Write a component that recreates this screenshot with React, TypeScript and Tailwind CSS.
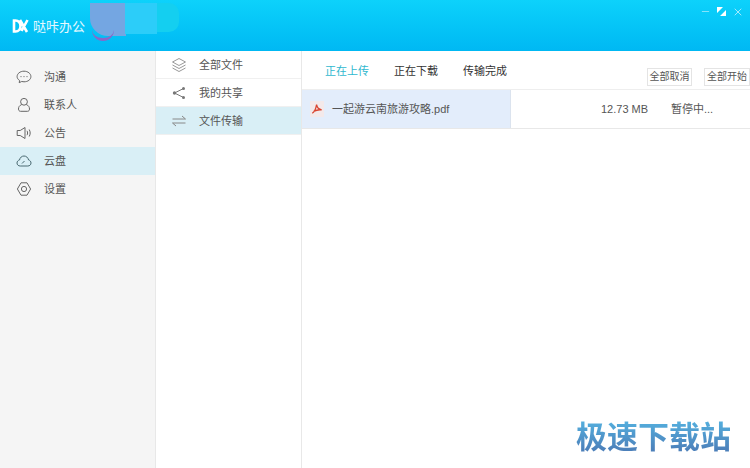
import { Minus, X } from 'lucide-react';

const CJK = "font-['Liberation_Sans','Noto_Sans_CJK_SC',sans-serif]";

const iconProps = {
  width: 16,
  height: 16,
  viewBox: '0 0 16 16',
  fill: 'none',
  stroke: '#666',
  strokeWidth: 1,
};

const ChatIcon = () => (
  <svg {...iconProps}>
    <path d="M8 2.2c3.9 0 6.9 2.4 6.9 5.4s-3 5.2-6.9 5.2c-.8 0-1.6-.1-2.3-.3l-2.5 1.2.4-2.2C2 10.500 1.100 9.100 1.100 7.600 1.100 4.600 4.100 2.200 8 2.200z" />
    <circle cx="5" cy="7.600" r=".6" fill="#666" stroke="none" />
    <circle cx="8" cy="7.600" r=".6" fill="#666" stroke="none" />
    <circle cx="11" cy="7.600" r=".6" fill="#666" stroke="none" />
  </svg>
);

const UserIcon = () => (
  <svg {...iconProps}>
    <circle cx="8" cy="4.800" r="3.400" />
    <path d="M5.600 7.600C3.400 8.500 2.500 10 2.500 12c0 1.300.7 2.300 2 2.300h7c1.300 0 2-1 2-2.300 0-2-.9-3.500-3.100-4.400" />
  </svg>
);

const SpeakerIcon = () => (
  <svg {...iconProps}>
    <path d="M1.200 5.500h3l4.800-3v11l-4.800-3h-3z" />
    <path d="M11 5.800c.8 1.400.8 3 0 4.400M13.200 4.500c1.300 2.300 1.300 4.700 0 7" />
  </svg>
);

const CloudIcon = () => (
  <svg {...iconProps} stroke="#4a6a72">
    <path d="M4.200 13c-1.900 0-3.200-1.300-3.200-3 0-1.500 1-2.700 2.500-3C4 4.500 5.800 3 8 3s4 1.500 4.600 4c1.400.3 2.400 1.500 2.400 3 0 1.700-1.300 3-3.200 3z" />
    <path d="M6 10.500l2.500-2.500" />
  </svg>
);

const GearIcon = () => (
  <svg {...iconProps}>
    <path d="M5 1.800h6l3.600 6.200L11 14.200H5L1.400 8z" strokeLinejoin="round" />
    <circle cx="8" cy="8" r="2.600" />
  </svg>
);

const LayersIcon = () => (
  <svg {...iconProps} stroke="#999">
    <path d="M8 1.500l6.500 3.500L8 8.500 1.500 5z" />
    <path d="M1.500 8L8 11.500 14.500 8M1.500 11L8 14.500 14.500 11" />
  </svg>
);

const ShareIcon = () => (
  <svg {...iconProps} stroke="#777">
    <path d="M12.500 3.500L3.500 8l9 4.500" />
    <circle cx="12.500" cy="3.500" r="1.500" fill="#777" stroke="none" />
    <circle cx="3.500" cy="8" r="1.700" fill="#777" stroke="none" />
    <circle cx="12.500" cy="12.500" r="1.500" fill="#777" stroke="none" />
  </svg>
);

const TransferIcon = () => (
  <svg {...iconProps} stroke="#888">
    <path d="M1.500 6h13L11 3M14.500 10h-13L5 13" />
  </svg>
);

const PdfIcon = () => (
  <span className="flex items-center justify-center w-[14px] h-[16px] bg-[#f3e9ea]">
    <svg width="12" height="12" viewBox="0 0 14 14" fill="none" stroke="#d9442f" strokeWidth="1.500">
      <path d="M1.500 12c2-1 4-4.500 5-10 .5 3 2.500 5.500 6 6-3.500-.5-7 .5-9.500 1.700" />
    </svg>
  </span>
);

const RestoreIcon = () => (
  <svg width="11" height="11" viewBox="0 0 11 11" fill="#fff">
    <path d="M1 1h6L1 7zM10 10H4l6-6z" />
  </svg>
);

const navItems = [
  { label: '沟通', icon: <ChatIcon /> },
  { label: '联系人', icon: <UserIcon /> },
  { label: '公告', icon: <SpeakerIcon /> },
  { label: '云盘', icon: <CloudIcon />, active: true },
  { label: '设置', icon: <GearIcon /> },
];

const fileMenu = [
  { label: '全部文件', icon: <LayersIcon /> },
  { label: '我的共享', icon: <ShareIcon /> },
  { label: '文件传输', icon: <TransferIcon />, active: true },
];

export default function App() {
  return (
    <div className={`relative flex flex-col w-[750px] h-[468px] overflow-hidden bg-white ${CJK}`}>
      <header className="relative flex items-center justify-between h-[51px] shrink-0 bg-gradient-to-b from-[#0dd2fb] to-[#00b8f3]">
        <div className="flex items-center gap-[4px] pl-[12px] pt-[1px]">
          <svg width="17" height="14" viewBox="0 0 17 14" fill="none" stroke="#fff" strokeWidth="2.600">
            <path d="M2 1.500v11h1.500c3 0 5-2.200 5-5.500s-2-5.500-5-5.500zM8 1l7 12M15.500 1L9.500 12" />
          </svg>
          <span className="text-[13px] leading-none text-white/90">哒咔办公</span>
        </div>
        <div className="flex items-center gap-[5px] pr-[6px] pb-[28px]">
          <Minus size={11} color="#bdeefc" strokeWidth={1.500} />
          <RestoreIcon />
          <X size={12} color="#d4f3fd" strokeWidth={1.500} />
        </div>
        {/* blurred-out account name over the header */}
        <div className="absolute left-[90px] top-[3px] w-[36px] h-[33px] rounded-bl-[18px] bg-[#74a6e2]" />
        <div className="absolute left-[92px] top-[30px] w-[22px] h-[11px] rounded-b-[12px] border-b-[3px] border-[#8a67c8]" />
        <div className="absolute left-[125px] top-[3px] w-[32px] h-[31px] bg-[#2ccdf9]" />
        <div className="absolute left-[157px] top-[3px] w-[22px] h-[29px] rounded-r-[10px] bg-[#14cff0]" />
      </header>

      <div className="flex flex-1 min-h-0">
        <aside className="w-[156px] shrink-0 pt-[12px] bg-[#f5f5f5] border-r border-[#e8e8e8]">
          {navItems.map((item) => (
            <div
              key={item.label}
              className={`flex items-center gap-[12px] h-[28px] pl-[16px] text-[11px] text-[#555] ${item.active ? 'bg-[#d9eff6]' : ''}`}
            >
              {item.icon}
              <span>{item.label}</span>
            </div>
          ))}
        </aside>

        <nav className="w-[146px] shrink-0 bg-white border-r border-[#e8e8e8]">
          {fileMenu.map((item) => (
            <div
              key={item.label}
              className={`flex items-center gap-[12px] h-[28px] pl-[15px] pt-[1px] text-[11px] text-[#555] border-b border-[#f0f0f0] ${item.active ? 'bg-[#d9eff6]' : ''}`}
            >
              {item.icon}
              <span>{item.label}</span>
            </div>
          ))}
        </nav>

        <main className="flex-1 min-w-0">
          <div className="flex items-start justify-between h-[39px] border-b border-[#eee]">
            <div className="flex gap-[25px] pl-[23px] pt-[12px] text-[11px] leading-[16px] text-[#333]">
              <span className="text-[#2fb8cf]">正在上传</span>
              <span>正在下载</span>
              <span>传输完成</span>
            </div>
            <div className="flex gap-[12px] pt-[17px]">
              <button className="w-[45px] h-[18px] text-[10px] leading-none text-[#555] bg-white border border-[#e4e4e4]">全部取消</button>
              <button className="w-[46px] h-[18px] text-[10px] leading-none text-[#555] bg-white border border-[#e4e4e4]">全部开始</button>
            </div>
          </div>
          <div className="flex items-center h-[39px] border-b border-[#e8e8e8] text-[11px] text-[#555]">
            <div className="flex items-center gap-[8px] w-[209px] h-full pl-[8px] bg-[#e3edfb] border-r border-[#dbe3ee]">
              <PdfIcon />
              <span>一起游云南旅游攻略.pdf</span>
            </div>
            <span className="w-[90px] pl-[90px] whitespace-nowrap">12.73 MB</span>
            <span className="pl-[70px] whitespace-nowrap">暂停中...</span>
          </div>
        </main>
      </div>

      {/* download-site watermark */}
      <div className="absolute right-[19px] top-[419px] text-[31px] leading-[38px] font-bold bg-gradient-to-b from-[#54b2e0] to-[#4a76b2] bg-clip-text text-transparent">
        极速下载站
      </div>
    </div>
  );
}
